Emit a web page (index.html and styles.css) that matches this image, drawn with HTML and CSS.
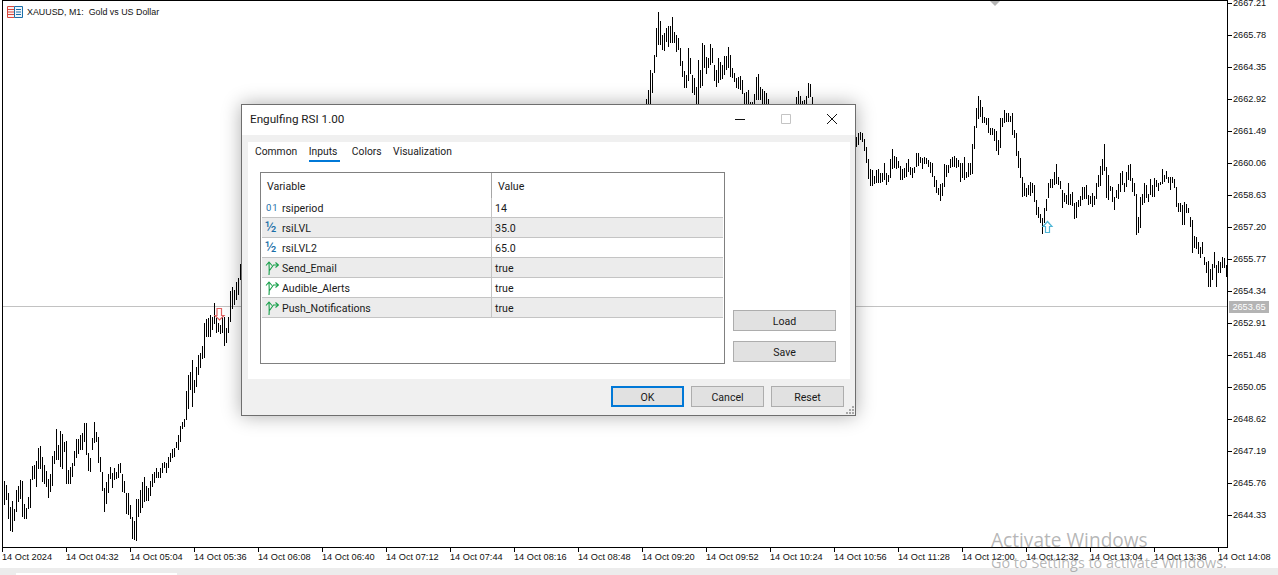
FILE: index.html
```html
<!DOCTYPE html>
<html lang="en">
<head>
    <meta charset="UTF-8">
    <title>XAUUSD, M1 - Engulfing RSI</title>
    <link rel="stylesheet" href="styles.css">
</head>
<body>
    <svg class="icon-defs" width="0" height="0">
        <symbol id="bool-icon" viewBox="0 0 14 14">
            <path d="M4 14C4.5 9 4 5 4 1M1 4.5L4 1L7 4.5M4.5 9.5L8.5 4H13.5M10.5 1.5L13.5 4L10.5 6.5" fill="none" stroke="#17a04a" stroke-width="1.1"/>
        </symbol>
    </svg>

    <div class="terminal">
        <div class="chart-row">
            <div class="plot">
                <svg class="bars" width="1224" height="546" viewBox="3 1 1224 546">
                    <path class="bid-line" d="M3 306.5H1227"/>
                    <path class="price-bars" d="M4.5 481V505M6.5 485V500M8.5 493V519M10.5 507V531M12.5 501V532M14.5 509V521M16.5 490V512M18.5 486V502M20.5 480V499M22.5 481V517M24.5 504V519M26.5 508V519M28.5 497V509M30.5 479V508M32.5 466V480M34.5 465V479M36.5 461V487M38.5 448V469M40.5 446V469M42.5 457V482M44.5 465V484M46.5 471V487M48.5 479V498M50.5 474V492M52.5 456V486M54.5 451V464M56.5 429V460M58.5 445V460M60.5 431V467M62.5 434V469M64.5 442V452M66.5 441V484M68.5 470V484M70.5 467V484M72.5 463V477M74.5 451V466M76.5 439V458M78.5 439V454M80.5 435V450M82.5 433V450M84.5 423V442M86.5 423V455M88.5 453V471M90.5 458V472M92.5 438V450M94.5 422V443M96.5 432V442M98.5 437V463M100.5 457V472M102.5 472V491M104.5 488V512M106.5 482V504M108.5 474V493M110.5 467V479M112.5 473V488M114.5 468V480M116.5 472V479M118.5 464V478M120.5 463V473M122.5 474V492M124.5 481V493M126.5 493V514M128.5 493V515M130.5 505V519M132.5 517V539M134.5 521V540M136.5 499V541M138.5 499V517M140.5 490V513M142.5 482V508M144.5 477V502M146.5 486V501M148.5 488V501M150.5 481V496M152.5 474V487M154.5 472V483M156.5 468V478M158.5 472V478M160.5 468V478M162.5 463V473M164.5 462V468M166.5 463V473M168.5 457V468M170.5 453V462M172.5 449V458M174.5 448V457M176.5 442V448M178.5 435V450M180.5 426V442M182.5 422V429M184.5 419V427M186.5 391V420M188.5 375V409M190.5 372V390M192.5 360V407M194.5 380V393M196.5 367V387M198.5 355V375M200.5 353V368M202.5 346V359M204.5 323V358M206.5 319V337M208.5 318V337M210.5 315V337M212.5 317V330M214.5 303V324M216.5 318V333M218.5 323V332M220.5 325V334M222.5 317V333M224.5 317V346M226.5 328V343M228.5 317V333M230.5 291V322M232.5 287V309M234.5 290V305M236.5 282V300M238.5 278V295M240.5 264V280
                    M646.5 99V104M648.5 90V104M650.5 70V104M652.5 73V93M654.5 55V73M656.5 28V57M658.5 12V45M660.5 21V45M662.5 35V50M664.5 33V51M666.5 28V42M668.5 26V47M670.5 26V43M672.5 17V43M674.5 32V43M676.5 35V52M678.5 38V50M680.5 48V66M682.5 61V77M684.5 71V88M686.5 75V88M688.5 48V81M690.5 58V74M692.5 75V93M694.5 78V95M696.5 87V104M698.5 60V104M700.5 70V88M702.5 43V86M704.5 45V68M706.5 57V74M708.5 58V68M710.5 44V65M712.5 48V63M714.5 65V81M716.5 70V87M718.5 58V83M720.5 62V80M722.5 65V79M724.5 56V75M726.5 56V70M728.5 47V68M730.5 55V77M732.5 68V78M734.5 73V82M736.5 78V88M738.5 77V89M740.5 76V90M742.5 80V94M744.5 93V104M746.5 92V104M748.5 90V104M750.5 102V104M752.5 102V104M754.5 94V104M756.5 77V100M758.5 74V100M760.5 87V100M762.5 89V104M764.5 91V104M766.5 93V104M768.5 99V104M796.5 97V104M798.5 91V104M800.5 96V104M802.5 101V104M804.5 100V104M806.5 96V104M808.5 83V98M810.5 84V97M812.5 97V104
                    M856.5 137V147M858.5 133V145M860.5 132V140M862.5 133V142M864.5 139V151M866.5 147V163M868.5 159V179M870.5 169V186M872.5 170V186M874.5 176V184M876.5 170V183M878.5 169V183M880.5 173V183M882.5 173V182M884.5 163V180M886.5 173V185M888.5 175V182M890.5 159V178M892.5 149V169M894.5 156V168M896.5 157V169M898.5 161V168M900.5 166V180M902.5 169V180M904.5 168V178M906.5 163V177M908.5 159V172M910.5 167V175M912.5 168V178M914.5 167V173M916.5 153V167M918.5 153V166M920.5 157V163M922.5 158V169M924.5 157V164M926.5 158V164M928.5 160V167M930.5 162V173M932.5 163V177M934.5 176V187M936.5 180V193M938.5 188V195M940.5 184V201M942.5 183V196M944.5 164V187M946.5 165V177M948.5 165V173M950.5 159V168M952.5 157V167M954.5 156V167M956.5 158V168M958.5 160V167M960.5 163V182M962.5 163V178M964.5 157V180M966.5 172V178M968.5 163V177M970.5 163V175M972.5 144V174M974.5 126V149M976.5 108V128M978.5 96V119M980.5 100V117M982.5 107V123M984.5 117V123M986.5 118V125M988.5 118V133M990.5 128V135M992.5 128V135M994.5 129V141M996.5 131V151M998.5 140V155M1000.5 118V148M1002.5 118V127M1004.5 110V123M1006.5 113V122M1008.5 113V122M1010.5 116V122M1012.5 113V135M1014.5 130V138M1016.5 133V156M1018.5 151V168M1020.5 158V178M1022.5 177V197M1024.5 183V196M1026.5 188V197M1028.5 185V195M1030.5 182V196M1032.5 183V193M1034.5 185V202M1036.5 200V215M1038.5 207V218M1040.5 214V223M1042.5 218V234M1044.5 208V223M1046.5 199V211M1048.5 183V198M1050.5 179V188M1052.5 179V188M1054.5 172V185M1056.5 164V184M1058.5 177V185M1060.5 181V189M1062.5 190V208M1064.5 193V202M1066.5 195V204M1068.5 183V205M1070.5 194V205M1072.5 192V206M1074.5 203V219M1076.5 202V218M1078.5 200V207
                    M1080.5 196V206M1082.5 187V200M1084.5 187V199M1086.5 185V199M1088.5 195V205M1090.5 196V204M1092.5 193V207M1094.5 196V205M1096.5 183V199M1098.5 175V187M1100.5 166V186M1102.5 159V175M1104.5 144V171M1106.5 167V198M1108.5 175V200M1110.5 186V191M1112.5 187V202M1114.5 197V210M1116.5 190V198M1118.5 184V199M1120.5 173V192M1122.5 171V185M1124.5 183V192M1126.5 172V187M1128.5 165V180M1130.5 164V181M1132.5 178V192M1134.5 183V196M1136.5 194V235M1138.5 217V233M1140.5 197V228M1142.5 194V205M1144.5 183V203M1146.5 185V198M1148.5 194V202M1150.5 179V195M1152.5 185V197M1154.5 178V197M1156.5 180V187M1158.5 183V191M1160.5 182V185M1162.5 169V184M1164.5 175V182M1166.5 171V179M1168.5 177V183M1170.5 177V190M1172.5 177V183M1174.5 179V188M1176.5 187V207M1178.5 203V212M1180.5 203V212M1182.5 205V225M1184.5 202V225M1186.5 204V213M1188.5 208V213M1190.5 217V227M1192.5 220V253M1194.5 236V248M1196.5 237V249M1198.5 242V254M1200.5 247V258M1202.5 242V254M1204.5 257V265M1206.5 262V273M1208.5 261V287M1210.5 269V287M1212.5 264V280M1214.5 252V268M1216.5 265V287M1218.5 261V273M1220.5 262V273M1222.5 257V268M1224.5 258V268M1226.5 265V277"/>
                    <path class="sell-arrow" d="M217 308.5H221.5V315.5H224L219.5 320L215 315.5H217Z"/>
                    <path class="buy-arrow" d="M1045.5 232.5H1049.5V226.5H1052L1047.5 221.5L1043 226.5H1045.5Z"/>
                    <path class="scroll-mark" d="M990 1H1000L995 6Z"/>
                </svg>
                <div class="chart-title">
                    <svg class="chart-icon" width="16" height="12" viewBox="0 0 16 12">
                        <path d="M7.5 .5H.5V11.5H7.5M1 3.5H7M1 6H7M1 8.5H7" fill="#fbeeee" stroke="#d8483c"/>
                        <path d="M7.5 .5H15.5V11.5H7.5ZM9 3.5H14M9 6H14M9 8.5H14" fill="#eef5fb" stroke="#1b6fa8"/>
                    </svg>
                    <span>XAUUSD, M1:&nbsp; Gold vs US Dollar</span>
                </div>
            </div>
            <div class="price-axis">
                <div class="price-label">2667.21</div>
                <div class="price-label">2665.78</div>
                <div class="price-label">2664.35</div>
                <div class="price-label">2662.92</div>
                <div class="price-label">2661.49</div>
                <div class="price-label">2660.06</div>
                <div class="price-label">2658.63</div>
                <div class="price-label">2657.20</div>
                <div class="price-label">2655.77</div>
                <div class="price-label">2654.34</div>
                <div class="price-label">2652.91</div>
                <div class="price-label">2651.48</div>
                <div class="price-label">2650.05</div>
                <div class="price-label">2648.62</div>
                <div class="price-label">2647.19</div>
                <div class="price-label">2645.76</div>
                <div class="price-label">2644.33</div>
                <div class="bid-label">2653.65</div>
            </div>
        </div>

        <div class="time-axis">
            <div class="time-label">14 Oct 2024</div>
            <div class="time-label">14 Oct 04:32</div>
            <div class="time-label">14 Oct 05:04</div>
            <div class="time-label">14 Oct 05:36</div>
            <div class="time-label">14 Oct 06:08</div>
            <div class="time-label">14 Oct 06:40</div>
            <div class="time-label">14 Oct 07:12</div>
            <div class="time-label">14 Oct 07:44</div>
            <div class="time-label">14 Oct 08:16</div>
            <div class="time-label">14 Oct 08:48</div>
            <div class="time-label">14 Oct 09:20</div>
            <div class="time-label">14 Oct 09:52</div>
            <div class="time-label">14 Oct 10:24</div>
            <div class="time-label">14 Oct 10:56</div>
            <div class="time-label">14 Oct 11:28</div>
            <div class="time-label">14 Oct 12:00</div>
            <div class="time-label">14 Oct 12:32</div>
            <div class="time-label">14 Oct 13:04</div>
            <div class="time-label">14 Oct 13:36</div>
            <div class="time-label">14 Oct 14:08</div>
        </div>

        <div class="bottom-strip">
            <div class="strip-tab"></div>
        </div>
    </div>

    <div class="watermark">
        <div class="watermark-title">Activate Windows</div>
        <div class="watermark-text">Go to Settings to activate Windows.</div>
    </div>

    <div class="dialog">
        <div class="title-bar">
            <span class="title-text">Engulfing RSI 1.00</span>
            <div class="window-controls">
                <svg width="12" height="12" viewBox="0 0 12 12"><path d="M1 6.5H11" stroke="#111"/></svg>
                <svg width="12" height="12" viewBox="0 0 12 12"><path d="M1.5 1.5H10.5V10.5H1.5Z" fill="none" stroke="#c4c4c4"/></svg>
                <svg width="12" height="12" viewBox="0 0 12 12"><path d="M1 1L11 11M11 1L1 11" stroke="#111"/></svg>
            </div>
        </div>

        <div class="dialog-body">
            <div class="panel">
                <div class="tabs">
                    <span class="tab">Common</span>
                    <span class="tab active">Inputs</span>
                    <span class="tab">Colors</span>
                    <span class="tab">Visualization</span>
                </div>
                <div class="panel-content">
                    <div class="inputs-table">
                        <div class="table-head">
                            <div class="head-name">Variable</div>
                            <div class="head-value">Value</div>
                        </div>
                        <div class="row">
                            <div class="cell-name"><span class="type-icon type-int">01</span>rsiperiod</div>
                            <div class="cell-value">14</div>
                        </div>
                        <div class="row odd">
                            <div class="cell-name"><span class="type-icon type-float">½</span>rsiLVL</div>
                            <div class="cell-value">35.0</div>
                        </div>
                        <div class="row">
                            <div class="cell-name"><span class="type-icon type-float">½</span>rsiLVL2</div>
                            <div class="cell-value">65.0</div>
                        </div>
                        <div class="row odd">
                            <div class="cell-name"><span class="type-icon"><svg width="14" height="14"><use href="#bool-icon"/></svg></span>Send_Email</div>
                            <div class="cell-value">true</div>
                        </div>
                        <div class="row">
                            <div class="cell-name"><span class="type-icon"><svg width="14" height="14"><use href="#bool-icon"/></svg></span>Audible_Alerts</div>
                            <div class="cell-value">true</div>
                        </div>
                        <div class="row odd">
                            <div class="cell-name"><span class="type-icon"><svg width="14" height="14"><use href="#bool-icon"/></svg></span>Push_Notifications</div>
                            <div class="cell-value">true</div>
                        </div>
                    </div>
                    <div class="side-buttons">
                        <button class="btn btn-side">Load</button>
                        <button class="btn btn-side">Save</button>
                    </div>
                </div>
            </div>
            <div class="dialog-footer">
                <button class="btn btn-footer btn-default">OK</button>
                <button class="btn btn-footer">Cancel</button>
                <button class="btn btn-footer">Reset</button>
            </div>
        </div>
        <svg class="resize-grip" width="10" height="10" viewBox="0 0 10 10">
            <path d="M7 1h2v2h-2zM4 4h2v2h-2zM7 4h2v2h-2zM1 7h2v2h-2zM4 7h2v2h-2zM7 7h2v2h-2z" fill="#a8a8a8"/>
        </svg>
    </div>
</body>
</html>
```

FILE: styles.css
```css
* {
    box-sizing: border-box;
}

html, body {
    margin: 0;
    height: 575px;
    overflow: hidden;
    background: #fff;
}

body {
    position: relative;
    font-family: "Liberation Sans", Arial, sans-serif;
    font-size: 9.2px;
    color: #111;
}

.icon-defs {
    position: absolute;
}

/* chart */
.terminal {
    display: flex;
    flex-direction: column;
    height: 575px;
}

.chart-row {
    display: flex;
    height: 548px;
    padding-left: 2px;
}

.plot {
    position: relative;
    width: 1226px;
    border: 1px solid #000;
    overflow: hidden;
}

.bars {
    display: block;
}

.bid-line {
    stroke: #c2c2c2;
    fill: none;
}

.price-bars {
    stroke: #000;
    stroke-width: 1;
    fill: none;
}

.sell-arrow {
    fill: #fff;
    stroke: #e06464;
    stroke-width: 1.2;
}

.buy-arrow {
    fill: #fff;
    stroke: #4fb6d6;
    stroke-width: 1.2;
}

.scroll-mark {
    fill: #b4b4b4;
}

.chart-title {
    position: absolute;
    left: 4px;
    top: 5px;
    display: flex;
    align-items: center;
    gap: 4px;
    font-size: 8.9px;
    white-space: pre;
}

.price-axis {
    position: relative;
    flex: 1;
    margin-top: -13px;
}

.price-label {
    display: flex;
    align-items: center;
    gap: 1px;
    height: 32px;
}

.price-label::before {
    content: "";
    width: 4px;
    height: 1px;
    background: #000;
}

.bid-label {
    position: absolute;
    left: 1px;
    top: 314px;
    width: 40px;
    height: 12px;
    line-height: 12px;
    text-align: center;
    background: #b4b4b4;
    color: #fff;
}

.time-axis {
    display: flex;
    height: 20px;
    padding-left: 2px;
}

.time-label {
    flex: 0 0 64px;
    white-space: nowrap;
    line-height: 10px;
}

.time-label::before {
    content: "";
    display: block;
    width: 1px;
    height: 4px;
    background: #000;
}

.bottom-strip {
    flex: 1;
    padding: 5px 101px 0 16px;
    background: #ececec;
}

.strip-tab {
    width: 161px;
    height: 100%;
    background: #fff;
}

/* watermark */
.watermark {
    position: absolute;
    left: 991px;
    top: 527px;
    font-family: "Open Sans", "Noto Sans", sans-serif;
    color: rgba(120, 120, 120, 0.55);
    white-space: nowrap;
}

.watermark-title {
    font-size: 19.1px;
    line-height: 26px;
}

.watermark-text {
    font-size: 14.4px;
    line-height: 19px;
}

/* dialog */
.dialog {
    position: absolute;
    left: 241px;
    top: 104px;
    width: 615px;
    height: 312px;
    display: flex;
    flex-direction: column;
    border: 1px solid #6e6e6e;
    background: #f0f0f0;
    box-shadow: 0 0 18px rgba(0, 0, 0, 0.32);
    font-family: Roboto, "Noto Sans", sans-serif;
    font-size: 10.6px;
    color: #1a1a1a;
}

.title-bar {
    display: flex;
    align-items: center;
    justify-content: space-between;
    height: 30px;
    padding: 0 17px 2px 8px;
    background: #fff;
}

.title-text {
    font-size: 11.7px;
}

.window-controls {
    display: flex;
    gap: 34px;
}

.dialog-body {
    flex: 1;
    display: flex;
    flex-direction: column;
    padding: 7px 5px 0 6px;
}

.panel {
    height: 237px;
    padding: 0 14px 15px 12px;
    background: #fff;
    display: flex;
    flex-direction: column;
}

.tabs {
    display: flex;
    gap: 11.5px;
    height: 30px;
    margin-left: -5px;
    font-size: 10.3px;
}

.tab {
    height: 20px;
    line-height: 19px;
}

.tab.active {
    padding-right: 3px;
    border-bottom: 2px solid #0078d7;
}

.panel-content {
    flex: 1;
    display: flex;
    gap: 8px;
}

.inputs-table {
    width: 465px;
    padding: 0 1px;
    border: 1px solid #808080;
}

.table-head {
    display: flex;
    height: 25px;
    line-height: 27px;
}

.head-name {
    width: 230px;
    padding-left: 5px;
    border-right: 1px solid #a6a6a6;
}

.head-value {
    padding-left: 6px;
}

.row {
    display: flex;
    height: 20px;
    line-height: 21px;
    border-bottom: 1px solid #c4c4c4;
}

.row.odd {
    background: #ececec;
}

.cell-name {
    display: flex;
    width: 230px;
    padding-left: 3px;
    border-right: 1px solid #c4c4c4;
}

.cell-value {
    padding-left: 3px;
}

.type-icon {
    width: 17px;
    flex-shrink: 0;
    display: flex;
    align-items: center;
}

.type-int {
    font-size: 9.5px;
    color: #1b6fa8;
    letter-spacing: 0.8px;
    padding-left: 1px;
}

.type-float {
    font-size: 15px;
    color: #1b6fa8;
}

.side-buttons {
    display: flex;
    flex-direction: column;
    justify-content: flex-end;
    gap: 10px;
    padding-bottom: 2px;
}

.btn {
    padding: 2px 0 0;
    font: inherit;
    color: inherit;
    background: #e1e1e1;
    border: 1px solid #adadad;
    border-radius: 0;
}

.btn-side {
    width: 103px;
    height: 21px;
}

.dialog-footer {
    display: flex;
    justify-content: flex-end;
    gap: 7px;
    padding: 7px 6px 0 0;
}

.btn-footer {
    width: 73px;
    height: 21px;
}

.btn-default {
    border: 2px solid #0078d7;
}

.resize-grip {
    position: absolute;
    right: 0;
    bottom: 0;
}
```
